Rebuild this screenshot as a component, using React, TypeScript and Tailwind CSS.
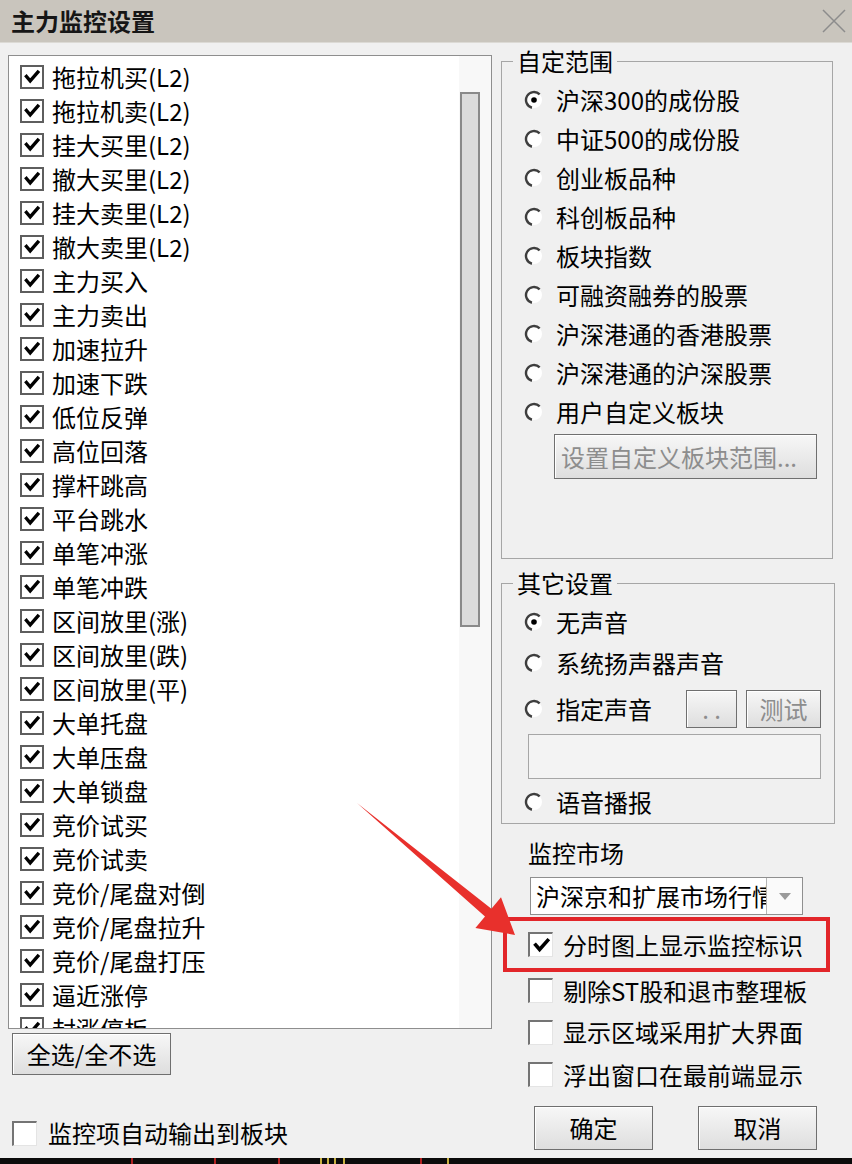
import React from "react";

const FONT = "font-['Noto_Sans_CJK_SC','Noto_Sans',sans-serif]";

const items = [
  "拖拉机买(L2)",
  "拖拉机卖(L2)",
  "挂大买里(L2)",
  "撤大买里(L2)",
  "挂大卖里(L2)",
  "撤大卖里(L2)",
  "主力买入",
  "主力卖出",
  "加速拉升",
  "加速下跌",
  "低位反弹",
  "高位回落",
  "撑杆跳高",
  "平台跳水",
  "单笔冲涨",
  "单笔冲跌",
  "区间放里(涨)",
  "区间放里(跌)",
  "区间放里(平)",
  "大单托盘",
  "大单压盘",
  "大单锁盘",
  "竞价试买",
  "竞价试卖",
  "竞价/尾盘对倒",
  "竞价/尾盘拉升",
  "竞价/尾盘打压",
  "逼近涨停",
  "封涨停板",
];

function CheckMark({ size = 18 }: { size?: number }) {
  return (
    <svg width={size} height={size} viewBox="0 0 18 18">
      <path d="M3.5 8.5 L7.2 12.8 L14.8 4.2" fill="none" stroke="#000" strokeWidth="3.4" strokeLinecap="square" />
    </svg>
  );
}

function ListCheck() {
  return (
    <div className="w-[24px] h-[24px] border-2 border-[#5e5e5e] bg-white flex items-center justify-center shrink-0">
      <CheckMark />
    </div>
  );
}

function SunkenCheck({ checked = false }: { checked?: boolean }) {
  return (
    <div className="w-[25px] h-[25px] border-t-2 border-l-2 border-r border-b border-t-[#747474] border-l-[#747474] border-r-[#e4e4e4] border-b-[#e4e4e4] bg-white flex items-center justify-center shrink-0">
      {checked && <CheckMark size={19} />}
    </div>
  );
}

function Radio({ checked = false }: { checked?: boolean }) {
  return (
    <svg width="20" height="20" viewBox="0 0 20 20" className="shrink-0">
      <circle cx="10" cy="10" r="8" fill="#fff" />
      <path d="M15.66 4.34 A8 8 0 1 0 7.93 17.73" fill="none" stroke="#3e3e3e" strokeWidth="2.4" />
      {checked && <circle cx="10" cy="10" r="2.8" fill="#000" />}
    </svg>
  );
}

function Btn({ className = "", children }: { className?: string; children: React.ReactNode }) {
  return (
    <div
      className={`border border-[#6f6f6f] bg-linear-to-b from-[#f7f7f7] to-[#dedede] shadow-[inset_1px_1px_0_#ffffff] flex items-center justify-center text-[24px] leading-none shrink-0 ${className}`}
    >
      {children}
    </div>
  );
}

function RadioRow({ label, checked = false, h }: { label: string; checked?: boolean; h: string }) {
  return (
    <div className={`flex items-center gap-[12px] ${h}`}>
      <Radio checked={checked} />
      <span className="text-[24px] leading-none">{label}</span>
    </div>
  );
}

export default function App() {
  return (
    <div className={`relative w-[852px] h-[1164px] overflow-hidden bg-[#f0f0f0] text-[#000] ${FONT} flex flex-col`}>
      {/* title bar */}
      <div className="h-[43px] bg-[#c9c5bd] border-b border-[#dcdad5] flex items-center justify-between pl-[11px] pr-[6px] shrink-0">
        <span className="text-[24px] font-bold leading-none text-[#161616]">主力监控设置</span>
        <svg width="24" height="24" viewBox="0 0 24 24">
          <path d="M1 1 L23 23 M23 1 L1 23" stroke="#8c8c8c" strokeWidth="1.5" />
        </svg>
      </div>

      {/* body */}
      <div className="flex-1 flex">
        {/* left column */}
        <div className="w-[501px] pl-[8px] flex flex-col">
          <div className="mt-[12px] w-[484px] h-[974px] border border-[#8e8e8e] bg-white flex overflow-hidden">
            <div className="flex-1 pt-[4px] pl-[11px] overflow-hidden">
              {items.map((t) => (
                <div key={t} className="h-[34px] flex items-center gap-[8px]">
                  <ListCheck />
                  <span className="text-[24px] leading-none whitespace-nowrap">{t}</span>
                </div>
              ))}
            </div>
            <div className="w-[32px] bg-[#f8f8f8] flex flex-col">
              <div className="mt-[36px] ml-[1px] w-[20px] h-[535px] bg-[#dcdcdc] border-2 border-[#8a8a8a]" />
            </div>
          </div>
          <Btn className="mt-[4px] ml-[4px] w-[159px] h-[42px]">全选/全不选</Btn>
          <div className="mt-[38px] ml-[4px] h-[40px] flex items-center gap-[11px]">
            <SunkenCheck />
            <span className="text-[24px] leading-none">监控项自动输出到板块</span>
          </div>
        </div>

        {/* right column */}
        <div className="w-[332px] flex flex-col">
          <fieldset className="mt-[4px] h-[512px] border border-[#a6a6a6]">
            <legend className="ml-[11px] px-[4px] text-[24px] leading-[28px]">自定范围</legend>
            <div className="pt-[5px] pl-[22px] flex flex-col">
              <RadioRow label="沪深300的成份股" checked h="h-[39px]" />
              <RadioRow label="中证500的成份股" h="h-[39px]" />
              <RadioRow label="创业板品种" h="h-[39px]" />
              <RadioRow label="科创板品种" h="h-[39px]" />
              <RadioRow label="板块指数" h="h-[39px]" />
              <RadioRow label="可融资融券的股票" h="h-[39px]" />
              <RadioRow label="沪深港通的香港股票" h="h-[39px]" />
              <RadioRow label="沪深港通的沪深股票" h="h-[39px]" />
              <RadioRow label="用户自定义板块" h="h-[39px]" />
              <Btn className="mt-[3px] ml-[30px] w-[263px] h-[45px] justify-start pl-[6px] text-[#8d8d8d] whitespace-nowrap">
                设置自定义板块范围...
              </Btn>
            </div>
          </fieldset>

          <fieldset className="mt-[10px] h-[255px] border border-[#a6a6a6]">
            <legend className="ml-[11px] px-[4px] text-[24px] leading-[28px]">其它设置</legend>
            <div className="pt-[5px] pl-[22px] pr-[13px] flex flex-col">
              <RadioRow label="无声音" checked h="h-[40px]" />
              <RadioRow label="系统扬声器声音" h="h-[41px]" />
              <div className="mt-[6px] h-[39px] flex items-center">
                <Radio />
                <span className="ml-[12px] text-[24px] leading-none">指定声音</span>
                <div className="flex-1" />
                <Btn className="w-[51px] h-[38px] text-[#8d8d8d] text-[16px]">. .</Btn>
                <Btn className="ml-[9px] w-[75px] h-[38px] text-[#8d8d8d]">测试</Btn>
              </div>
              <div className="mt-[6px] ml-[4px] w-[293px] h-[45px] border border-[#a6a6a6] bg-[#f3f3f3]" />
              <div className="mt-[4px]">
                <RadioRow label="语音播报" h="h-[38px]" />
              </div>
            </div>
          </fieldset>

          <div className="mt-[14px] ml-[27px] h-[30px] flex items-center text-[24px] leading-none">监控市场</div>

          <div className="mt-[9px] ml-[29px] w-[273px] h-[38px] border border-[#8f8f8f] bg-white flex">
            <div className="flex-1 overflow-hidden whitespace-nowrap pl-[5px] flex items-center text-[24px] leading-none">
              沪深京和扩展市场行情
            </div>
            <div className="w-[36px] border-l border-[#b5b5b5] bg-[#fafafa] flex items-center justify-center">
              <svg width="12" height="7" viewBox="0 0 12 7">
                <path d="M0 0 L12 0 L6 7 Z" fill="#9a9a9a" />
              </svg>
            </div>
          </div>

          <div className="mt-[2px] ml-[2px] w-[327px] h-[55px] border-4 border-[#e2262a] flex items-center pl-[21px] gap-[10px]">
            <SunkenCheck checked />
            <span className="text-[24px] leading-none whitespace-nowrap">分时图上显示监控标识</span>
          </div>

          <div className="ml-[27px] h-[37px] flex items-center gap-[10px]">
            <SunkenCheck />
            <span className="text-[24px] leading-none whitespace-nowrap">剔除ST股和退市整理板</span>
          </div>
          <div className="mt-[2px] ml-[27px] h-[42px] flex items-center gap-[10px]">
            <SunkenCheck />
            <span className="text-[24px] leading-none whitespace-nowrap">显示区域采用扩大界面</span>
          </div>
          <div className="ml-[27px] h-[43px] flex items-center gap-[10px]">
            <SunkenCheck />
            <span className="text-[24px] leading-none whitespace-nowrap">浮出窗口在最前端显示</span>
          </div>

          <div className="mt-[10px] flex">
            <Btn className="ml-[33px] w-[119px] h-[44px]">确定</Btn>
            <Btn className="ml-[45px] w-[119px] h-[44px]">取消</Btn>
          </div>
        </div>
      </div>

      {/* bottom strip (chart behind dialog) */}
      <div className="h-[6px] bg-[#0b0b0b] shrink-0">
        <svg width="852" height="6" viewBox="0 0 852 6">
          <rect x="131" y="0" width="2" height="6" fill="#b02020" />
          <rect x="214" y="0" width="2" height="6" fill="#b02020" />
          <rect x="278" y="0" width="2" height="6" fill="#b02020" />
          <rect x="320" y="0" width="2" height="6" fill="#c8b040" />
          <rect x="327" y="0" width="2" height="6" fill="#c8b040" />
          <rect x="334" y="0" width="2" height="6" fill="#c8b040" />
          <rect x="343" y="0" width="2" height="6" fill="#c8b040" />
          <rect x="420" y="0" width="2" height="6" fill="#b02020" />
          <rect x="447" y="0" width="2" height="6" fill="#c8b040" />
        </svg>
      </div>

      {/* red annotation arrow */}
      <svg className="absolute left-0 top-0 pointer-events-none" width="852" height="1164" viewBox="0 0 852 1164">
        <polygon
          points="357,803 491.4,908.8 501,897.3 515,935 475.4,927.9 485,916.4"
          fill="#e8302c"
        />
      </svg>
    </div>
  );
}
